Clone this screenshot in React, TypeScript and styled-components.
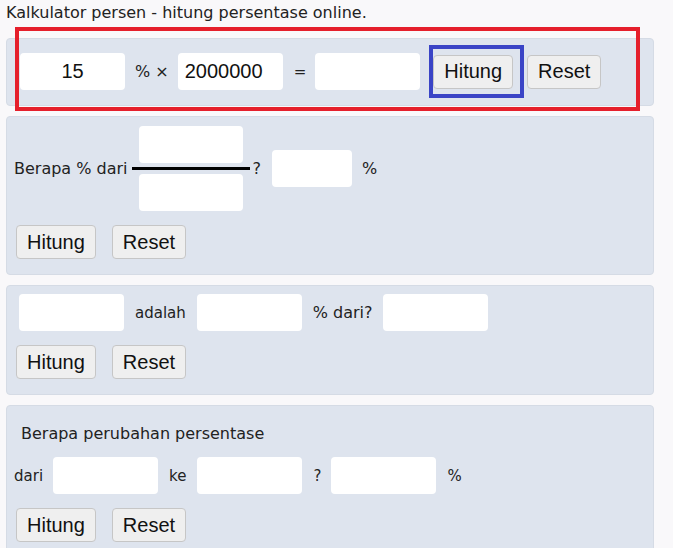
import styled, { createGlobalStyle } from "styled-components";

const GlobalStyle = createGlobalStyle`
  body {
    margin: 0;
    background: #f9f8fa;
    font-family: "DejaVu Sans", Verdana, sans-serif;
    font-size: 15px;
    color: #222;
  }
`;

const Page = styled.div`
  padding: 2px 19px 0 6px;
`;

const Title = styled.div`
  font-size: 16px;
  line-height: 21px;
  color: #222;
  margin-bottom: 15px;
`;

const Panel = styled.div<{ $pad?: string }>`
  position: relative;
  background: #dee4ee;
  border: 1px solid #d5dbe5;
  border-radius: 4px;
  padding: ${(p) => p.$pad || "14px"};
  margin-bottom: 10px;
  display: flex;
  flex-direction: column;
  gap: 14px;
`;

const Row = styled.div<{ $gap?: number }>`
  display: flex;
  align-items: center;
  gap: ${(p) => p.$gap ?? 10}px;
`;

const Label = styled.span<{ $ml?: number; $size?: number }>`
  white-space: nowrap;
  font-size: ${(p) => p.$size ?? 15}px;
  margin-left: ${(p) => p.$ml ?? 0}px;
`;

const Field = styled.input<{ $w?: number; $center?: boolean }>`
  width: ${(p) => p.$w ?? 105}px;
  height: 37px;
  box-sizing: border-box;
  border: none;
  border-radius: 4px;
  background: #fff;
  padding: 0 7px;
  font-family: "Liberation Sans", Arial, sans-serif;
  font-size: 20px;
  color: #111;
  text-align: ${(p) => (p.$center ? "center" : "left")};
  outline: none;
`;

const Button = styled.button`
  height: 34px;
  box-sizing: border-box;
  padding: 0 10px;
  background: #efefef;
  border: 1px solid #c6c6c6;
  border-radius: 4px;
  font-family: "Liberation Sans", Arial, sans-serif;
  font-size: 20px;
  color: #111;
`;

const ButtonRow = styled.div<{ $ml?: number }>`
  display: flex;
  gap: 16px;
  margin-left: ${(p) => p.$ml ?? 0}px;
`;

const Fraction = styled.div`
  display: flex;
  flex-direction: column;
  align-items: center;
  gap: 4px;
  width: 118px;
`;

const FractionLine = styled.div`
  align-self: stretch;
  height: 3px;
  background: #000;
`;

const RedFrame = styled.div`
  position: absolute;
  left: 8px;
  top: -12px;
  width: 625px;
  height: 84px;
  box-sizing: border-box;
  border: 4px solid #e51f2b;
  pointer-events: none;
`;

const Highlight = styled.span`
  position: relative;
  display: inline-flex;
  margin-left: 4px;

  &::after {
    content: "";
    position: absolute;
    left: -4px;
    top: -10px;
    right: -11px;
    bottom: -9px;
    border: 4px solid #3a44c6;
  }
`;

const SubTitle = styled.div`
  font-size: 16px;
  margin: 10px 0 0 7px;
`;

export default function App() {
  return (
    <Page>
      <GlobalStyle />
      <Title>Kalkulator persen - hitung persentase online.</Title>

      <Panel $pad="14px 13px 15px 13px">
        <Row $gap={9}>
          <Field $w={105} $center defaultValue="15" />
          <Label $size={16} $ml={1}>% ×</Label>
          <Field $w={105} defaultValue="2000000" />
          <Label $ml={2}>=</Label>
          <Field $w={105} />
          <Highlight>
            <Button>Hitung</Button>
          </Highlight>
          <Button style={{ marginLeft: 5 }}>Reset</Button>
        </Row>
        <RedFrame />
      </Panel>

      <Panel $pad="9px 9px 15px 7px">
        <Row $gap={0}>
          <Label $size={16}>Berapa % dari</Label>
          <Fraction style={{ marginLeft: 4 }}>
            <Field $w={104} />
            <FractionLine />
            <Field $w={104} />
          </Fraction>
          <Label $size={16} $ml={3}>?</Label>
          <Field $w={80} style={{ marginLeft: 11 }} />
          <Label $size={16} $ml={10}>%</Label>
        </Row>
        <ButtonRow $ml={2}>
          <Button>Hitung</Button>
          <Button>Reset</Button>
        </ButtonRow>
      </Panel>

      <Panel $pad="8px 9px 15px 9px">
        <Row $gap={11}>
          <Field $w={105} style={{ marginLeft: 3 }} />
          <Label>adalah</Label>
          <Field $w={105} />
          <Label $size={16}>% dari?</Label>
          <Field $w={105} style={{ marginLeft: -1 }} />
        </Row>
        <ButtonRow>
          <Button>Hitung</Button>
          <Button>Reset</Button>
        </ButtonRow>
      </Panel>

      <Panel $pad="8px 9px 15px 7px">
        <SubTitle>Berapa perubahan persentase</SubTitle>
        <Row $gap={10}>
          <Label>dari</Label>
          <Field $w={105} />
          <Label $ml={1}>ke</Label>
          <Field $w={105} style={{ marginLeft: 1 }} />
          <Label $ml={1}>?</Label>
          <Field $w={105} />
          <Label $ml={1}>%</Label>
        </Row>
        <ButtonRow $ml={2}>
          <Button>Hitung</Button>
          <Button>Reset</Button>
        </ButtonRow>
      </Panel>
    </Page>
  );
}
